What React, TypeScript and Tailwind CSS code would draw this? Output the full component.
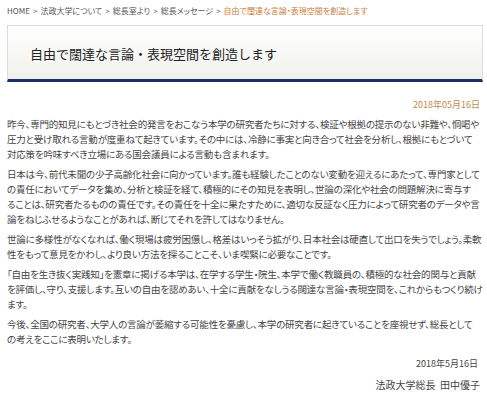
import React from "react";

const paragraphs: string[][] = [
  [
    "昨今、専門的知見にもとづき社会的発言をおこなう本学の研究者たちに対する、検証や根拠の提示のない非難や、恫喝や",
    "圧力と受け取れる言動が度重ねて起きています。その中には、冷静に事実と向き合って社会を分析し、根拠にもとづいて",
    "対応策を吟味すべき立場にある国会議員による言動も含まれます。",
  ],
  [
    "日本は今、前代未聞の少子高齢化社会に向かっています。誰も経験したことのない変動を迎えるにあたって、専門家として",
    "の責任においてデータを集め、分析と検証を経て、積極的にその知見を表明し、世論の深化や社会の問題解決に寄与す",
    "ることは、研究者たるものの責任です。その責任を十全に果たすために、適切な反証なく圧力によって研究者のデータや言",
    "論をねじふせるようなことがあれば、断じてそれを許してはなりません。",
  ],
  [
    "世論に多様性がなくなれば、働く現場は疲労困憊し、格差はいっそう拡がり、日本社会は硬直して出口を失うでしょう。柔軟",
    "性をもって意見をかわし、より良い方法を探ることこそ、いま喫緊に必要なことです。",
  ],
  [
    "「自由を生き抜く実践知」を憲章に掲げる本学は、在学する学生・院生、本学で働く教職員の、積極的な社会的関与と貢献",
    "を評価し、守り、支援します。互いの自由を認めあい、十全に貢献をなしうる闊達な言論・表現空間を、これからもつくり続け",
    "ます。",
  ],
  [
    "今後、全国の研究者、大学人の言論が萎縮する可能性を憂慮し、本学の研究者に起きていることを座視せず、総長として",
    "の考えをここに表明いたします。",
  ],
];

export default function App() {
  return (
    <div className="w-[487px] h-[400px] overflow-hidden bg-white text-[#444] [font-family:'Noto_Sans_CJK_JP','Noto_Sans',sans-serif]">
      <div className="pl-[7px] pt-[4px] leading-[14px] text-[8px] text-[#555] whitespace-nowrap [font-feature-settings:'palt']">
        <span>HOME</span>
        <span className="mx-[3px]">&gt;</span>
        <span>法政大学について</span>
        <span className="mx-[3px]">&gt;</span>
        <span>総長室より</span>
        <span className="mx-[3px]">&gt;</span>
        <span>総長メッセージ</span>
        <span className="mx-[3px]">&gt;</span>
        <span className="text-[#c9803f]">自由で闊達な言論・表現空間を創造します</span>
      </div>

      <div className="ml-[7px] mt-[7px] w-[476px] h-[57px] border border-[#dcdcdc] border-b-[3px] border-b-[#1d2f6b] bg-gradient-to-b from-white to-[#f0f0ec] flex items-center pl-[22px] pt-[2px]">
        <h1 className="text-[13px] leading-[16px] text-[#222] font-normal whitespace-nowrap">
          自由で闊達な言論・表現空間を創造します
        </h1>
      </div>

      <div className="mt-[15px] pr-[7px] text-right text-[9px] leading-[15px] text-[#c08a50] [font-feature-settings:'palt']">
        2018年05月16日
      </div>

      <div className="mt-[5px] pl-[7px] text-[9.5px] tracking-[-0.2px] leading-[15px] [font-feature-settings:'palt']">
        {paragraphs.map((lines, i) => (
          <div key={i} className="mb-[5px]">
            {lines.map((line, j) => (
              <div key={j} className="whitespace-nowrap">
                {line}
              </div>
            ))}
          </div>
        ))}
      </div>

      <div className="mt-[9px] pr-[9px] text-right text-[9px] leading-[15px] [font-feature-settings:'palt']">
        2018年5月16日
      </div>
      <div className="mt-[6px] pr-[7px] text-right text-[10px] leading-[15px] [font-feature-settings:'palt']">
        法政大学総長&nbsp;&nbsp;田中優子
      </div>
    </div>
  );
}
